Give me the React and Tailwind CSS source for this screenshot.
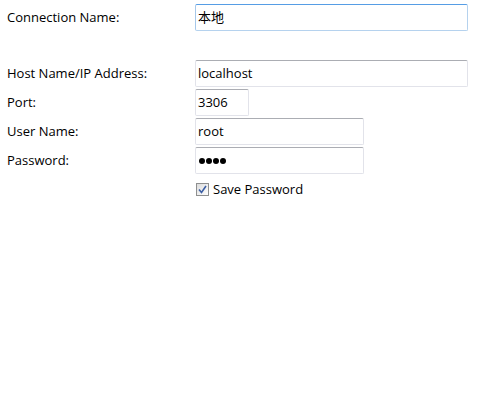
const inputBase =
  'h-[27px] rounded-[2px] border px-[2px] text-[13px] text-black flex items-center bg-white';
const idle = 'border-[#e2e3ea] border-t-[#abadb3]';
const focused = 'border-[#b5d2ee] border-t-[#569de5] border-l-[#a6c8ea]';

function Field({ label, value, width, active, password }) {
  return (
    <>
      <div className="flex items-center">{label}</div>
      <div className={`${inputBase} ${active ? focused : idle} ${width}`}>
        {password ? (
          <span className="flex gap-[1px] pl-[1px]">
            {[0, 1, 2, 3].map((i) => (
              <span key={i} className="w-[6px] h-[6px] rounded-full bg-black" />
            ))}
          </span>
        ) : (
          <span>{value}</span>
        )}
      </div>
    </>
  );
}

export default function App() {
  return (
    <div
      className="w-[493px] h-[396px] bg-white text-black text-[13px]"
      style={{ fontFamily: '"Open Sans", "Noto Sans CJK SC", sans-serif' }}
    >
      <div className="pt-[4px] pl-[7px]">
        <div className="grid grid-cols-[188px_auto] justify-start">
          <Field label="Connection Name:" value="本地" width="w-[273px]" active />
        </div>
        <div className="grid grid-cols-[188px_auto] justify-start mt-[29px] gap-y-[2px]">
          <Field label="Host Name/IP Address:" value="localhost" width="w-[273px]" />
          <Field label="Port:" value="3306" width="w-[54px]" />
          <Field label="User Name:" value="root" width="w-[169px]" />
          <Field label="Password:" password width="w-[169px]" />
          <div />
          <label className="flex items-center gap-[4px] mt-[4px] ml-[1px]">
            <span className="w-[13px] h-[13px] border border-[#8e8f8f] bg-gradient-to-br from-[#dcdcdc] to-white flex items-center justify-center">
              <svg width="9" height="9" viewBox="0 0 9 9">
                <path d="M1 4.5 L3.5 7.5 L8 1" fill="none" stroke="#3c5fa5" strokeWidth="1.6" />
              </svg>
            </span>
            <span>Save Password</span>
          </label>
        </div>
      </div>
    </div>
  );
}
